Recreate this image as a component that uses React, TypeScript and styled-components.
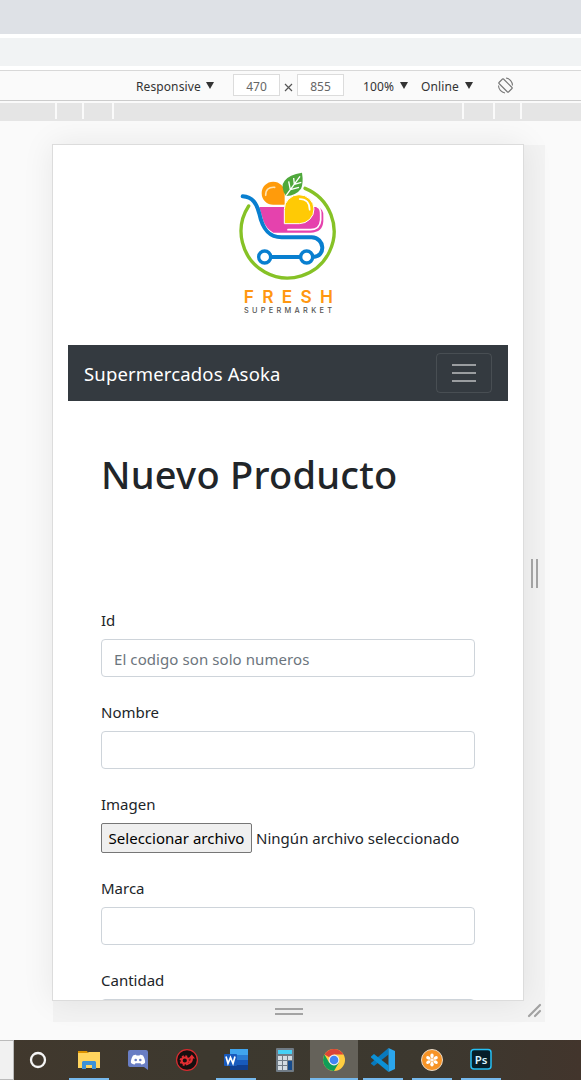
import React from "react";
import styled, { createGlobalStyle } from "styled-components";

const Global = createGlobalStyle`
  *{box-sizing:border-box}
  body{margin:0;width:581px;height:1080px;overflow:hidden;background:#fafafa;font-family:"Noto Sans","Open Sans",sans-serif;color:#212529}
`;
const Screen = styled.div`display:flex;flex-direction:column;width:581px;height:1080px;`;
const TabStrip = styled.div`height:34px;background:#dee1e6;`;
const AddressBar = styled.div`height:36px;background:#f1f3f4;border:solid #fff;border-width:4px 0;`;
const Toolbar = styled.div`
  height:31px;display:flex;align-items:flex-start;background:#fafafa;border-top:1px solid #d8d8d8;border-bottom:1px solid #ccc;
  padding-left:136px;font-size:12px;line-height:29px;color:#333;white-space:nowrap;
`;
const Label = styled.span<{ $w: number; $ml?: number; $ls?: number }>`
  width:${p => p.$w}px;margin-left:${p => p.$ml ?? 0}px;letter-spacing:${p => p.$ls ?? 0}px;height:29px;padding-top:1px;
`;
const Caret = styled.i<{ $gap: number }>`
  width:8px;height:7px;margin:11px ${p => p.$gap}px 0 0;background:#333;clip-path:polygon(0 0,100% 0,50% 100%);
`;
const SizeBox = styled.span`
  width:47px;height:22px;margin-top:3px;border:1px solid #dcdcdc;background:#fff;color:#666;text-align:center;line-height:23px;
`;
const Times = styled.span`width:17px;display:flex;justify-content:center;padding-top:12px;`;
const Rotate = styled.svg`margin:6px 0 0 24px;`;
const Ruler = styled.div`height:20px;padding-top:2px;display:flex;`;
const Segment = styled.i<{ $w: number }>`
  width:${p => p.$w}px;height:18px;background:linear-gradient(#fafafa,#fafafa) right top/2px 16px no-repeat #e5e5e5;
  &:last-child{background:#e5e5e5}
`;
const Stage = styled.div`
  height:919px;padding:23px 0 0 52px;display:grid;grid-template-columns:472px 21px;grid-template-rows:857px 21px;overflow:hidden;
`;
const Device = styled.main`
  width:472px;height:857px;border:1px solid #dcdcdc;background:#fff;overflow:hidden;padding:0 15px;
  box-shadow:0 0 30px rgba(0,0,0,.08);z-index:1;
`;
const SideGrip = styled.div`background:#f3f3f3;margin-top:1px;display:flex;gap:3px;align-items:center;padding-left:7px;`;
const BottomGrip = styled.div`background:#f3f3f3;display:flex;flex-direction:column;gap:3px;align-items:center;padding-top:7px;margin-left:1px;`;
const GripBar = styled.i<{ $v?: boolean }>`
  background:#a3a3a3;z-index:2;width:${p => (p.$v ? 2 : 28)}px;height:${p => (p.$v ? 29 : 2)}px;
`;
const Corner = styled.div`background:#f3f3f3;z-index:0;`;
const LogoBox = styled.div`height:200px;display:flex;justify-content:center;padding:15px 0 0 4px;`;
const Navbar = styled.nav`
  height:56px;background:#343a40;display:flex;align-items:center;justify-content:space-between;padding:0 16px;color:#fff;
`;
const Brand = styled.span`font-size:18.5px;letter-spacing:.15px;padding-top:1px;`;
const Toggler = styled.button`
  width:56px;height:40px;border:1px solid rgba(255,255,255,.1);border-radius:4px;background:none;padding:0;
  display:flex;flex-direction:column;gap:6px;align-items:center;justify-content:center;
  i{width:24px;height:2px;background:#9a9da0}
`;
const Title = styled.h1`
  margin:0;height:206px;padding:47px 0 0 33px;font-size:38px;font-weight:500;line-height:52px;letter-spacing:.25px;white-space:nowrap;
`;
const Form = styled.form`padding:0 33px;display:flex;flex-direction:column;gap:22px;`;
const Group = styled.label`display:flex;flex-direction:column;gap:8px;`;
const Caption = styled.span`font-size:15px;line-height:24px;height:24px;padding-top:1px;`;
const Input = styled.input`
  height:38px;border:1px solid #ced4da;border-radius:4px;padding:2px 12px 0;font:15px "Noto Sans",sans-serif;letter-spacing:.08px;background:#fff;
  &::placeholder{color:#6c757d;opacity:1}
`;
const FileRow = styled.span`display:flex;align-items:center;gap:4px;height:30px;font-size:15px;letter-spacing:.02px;white-space:nowrap;`;
const FileButton = styled.span`
  width:151px;height:30px;border:1px solid #767676;border-radius:2px;background:#efefef;color:#000;text-align:center;line-height:29px;
`;
const Taskbar = styled.footer`height:40px;display:flex;background:linear-gradient(90deg,#41382d,#3d392f 35%,#3c382f 75%,#42352c);`;
const SearchEnd = styled.div`width:14px;background:#f1f1f1;border:solid #bbb;border-width:1px 1px 1px 0;`;
const Task = styled.div<{ $active?: boolean; $open?: boolean; $gap?: number }>`
  width:48px;height:40px;margin-right:${p => p.$gap ?? 1}px;display:flex;align-items:center;justify-content:center;
  background:${p => (p.$active ? "#65625a" : "transparent")};
  ${p => p.$open && `background-image:linear-gradient(#76b9ed,#76b9ed);background-size:${p.$active ? 48 : 40}px 2px;background-position:center bottom;background-repeat:no-repeat;`}
`;

const Logo = () => (
  <svg width="140" height="165" viewBox="0 0 420 495">
    <path d="M86 138A139.5 139.5 0 1 0 255 85" fill="none" stroke="#86c226" strokeWidth="10" strokeLinecap="round" />
    <path d="M118 141H290Q312 144 310 170V184Q308 218 272 218H160Q138 205 130 182Z" fill="#e542ad" />
    <path d="M292 141Q303 145 302 165V180Q300 208 272 209H204" fill="none" stroke="#fff" strokeWidth="5" strokeLinecap="round" />
    <path d="M194 134V100A34.500 34.500 0 1 0 160 134Z" fill="#ff9b0b" />
    <path d="M137 106Q137 80 164 82" fill="none" stroke="#ffe3b0" strokeWidth="5" strokeLinecap="round" />
    <path d="M198 108Q179 79 194 62Q207 44 246 38Q251 68 243 86Q229 106 198 108Z" fill="#4fa83b" />
    <path d="M198 107L240 49M211 89L206 64M211 89L237 82M223 73L221 54M223 73L244 67" fill="none" stroke="#fff" strokeWidth="4" />
    <path d="M193 191V148A44.500 43.500 0 1 1 238 191Z" fill="#ffca05" stroke="#fff" strokeWidth="3" />
    <path d="M239 117Q269 118 269 149" fill="none" stroke="#fff" strokeWidth="5" strokeLinecap="round" />
    <path d="M68 109C98 111 110 130 118 161C127 205 145 232 185 232H275C315 233 318 290 280 291H260M135 291H260" fill="none" stroke="#087fd0" strokeWidth="12" strokeLinecap="round" />
    <g fill="#fff" stroke="#087fd0" strokeWidth="10"><circle cx="134" cy="291" r="18" /><circle cx="260" cy="291" r="18" /></g>
    <text x="71" y="428" textLength="268" fontFamily="Inter" fontWeight="600" fontSize="52" fill="#ff9711">FRESH</text>
    <text x="72" y="459" textLength="264" fontFamily="Inter" fontWeight="500" fontSize="22" fill="#555">SUPERMARKET</text>
  </svg>
);

const svg = { width: 24, height: 24, viewBox: "0 0 24 24" };
const Cortana = () => <svg {...svg}><circle cx="12" cy="12" r="7" fill="none" stroke="#f5f5f5" strokeWidth="2.3" /></svg>;
const Explorer = () => <svg {...svg}><path d="M1 3h9l1 2H1z" fill="#dd9300" /><path d="M1 5h9l2-1h11v16H1z" fill="#ffd45e" /><path d="M5 21v-7l1-1h12l1 1v7h-4v-4H9v4z" fill="#3c91d8" /></svg>;
const Discord = () => <svg {...svg}><path d="M4 2h16q2 0 2 2v18l-4-3H4q-2 0-2-2V4q0-2 2-2z" fill="#697ec4" /><path d="M7 7.500q2-1 3-.8l.5 .8h3l.5-.8q1-.2 3 .8 2.600 4.500 2 7.500-2 1.600-3.600 1.400l-.9-1.200h-5l-.9 1.200Q7 16.600 5 15q-.6-3 2-7.500z" fill="#fff" /><circle cx="9.700" cy="12" r="1.300" fill="#697ec4" /><circle cx="14.300" cy="12" r="1.300" fill="#697ec4" /></svg>;
const GearApp = () => <svg {...svg}><circle cx="12" cy="12" r="10.4" fill="#170f0f" stroke="#d92b2f" strokeWidth="1.2" /><circle cx="9.800" cy="12.500" r="3.100" fill="none" stroke="#e32e32" strokeWidth="2" /><circle cx="9.800" cy="12.500" r="4.500" fill="none" stroke="#e32e32" strokeWidth="1.500" strokeDasharray="2 1.530" /><path d="M12 15.500q3.500-1.500 3.500-5h-2l3.300-4 3.200 4h-2q0 5-6 6.500z" fill="#e32e32" /></svg>;
const Word = () => <svg {...svg}><path d="M6 1h18v6H6z" fill="#41a5ee" /><path d="M6 7h18v5H6z" fill="#2b7cd3" /><path d="M6 12h18v5H6z" fill="#185abd" /><path d="M6 17h18v5H6z" fill="#103f91" /><rect y="6" width="13" height="12" rx="1" fill="#185abd" /><path d="M2 8.500l2 7 2.500-6 2.500 6 2-7" stroke="#fff" strokeWidth="1.700" fill="none" /></svg>;
const Calc = () => <svg {...svg}><rect x="3" width="18" height="24" rx="1" fill="#707b85" /><path d="M5 2h14v4H5z" fill="#45d0f5" /><g fill="#d4dce2"><path d="M5 8h4v4H5zM10 8h4v4h-4zM15 8h4v4h-4zM5 13h4v4H5zM10 13h4v4h-4zM5 18h4v4H5zM10 18h4v4h-4z" /></g><path d="M15 13h4v9h-4z" fill="#164b8b" /></svg>;
const Chrome = () => <svg {...svg}><circle cx="12" cy="12" r="11" fill="#ffcd40" /><path d="M12 12L2.5 6.5A11 11 0 0 1 21.5 6.5H12z" fill="#db4437" /><path d="M2.5 6.5A11 11 0 0 0 12 23l4.8-8.3L12 12 7.2 14.7z" fill="#0f9d58" /><circle cx="12" cy="12" r="5.4" fill="#f1f1f1" /><circle cx="12" cy="12" r="4.3" fill="#4285f4" /></svg>;
const Code = () => <svg {...svg}><path d="M17.500 0v6.500L3 18l-3-2.200v-.8z" fill="#0879bd" /><path d="M0 8.500L3 6l14.500 11.500V24L0 9.500z" fill="#0b90d6" /><path d="M17.500 0L24 3v18l-6.500 3z" fill="#2ba6ed" /></svg>;
const Flower = () => (
  <svg {...svg}>
    <circle cx="12" cy="12" r="10.5" fill="#f79427" stroke="#e8d9c6" />
    <g fill="#fff">{[0, 60, 120, 180, 240, 300].map(a => <ellipse key={a} cx="12" cy="7.700" rx="1.700" ry="2.200" transform={`rotate(${a} 12 12)`} />)}</g>
    <path d="M12 8v8M8.500 10l7 4M8.500 14l7-4" stroke="#fff" strokeWidth="1" />
  </svg>
);
const Photoshop = () => <svg {...svg}><rect x="2" y="1.6" width="20" height="19.4" rx="3" fill="#061e29" stroke="#26c0f5" strokeWidth="1.5" /><text x="12" y="15.5" textAnchor="middle" fontSize="11.500" fontWeight="600" fill="#d9f3ff">Ps</text></svg>;

export default function App() {
  return (
    <Screen>
      <Global />
      <TabStrip />
      <AddressBar />
      <Toolbar>
        <Label $w={70} $ls={0.1}>Responsive</Label><Caret $gap={19} />
        <SizeBox>470</SizeBox>
        <Times><svg width="9" height="9"><path d="M1 1l7 7M8 1l-7 7" stroke="#555" strokeWidth="1.2" /></svg></Times>
        <SizeBox>855</SizeBox>
        <Label $w={37} $ml={19} $ls={0.1}>100%</Label><Caret $gap={13} />
        <Label $w={44} $ls={0.1}>Online</Label><Caret $gap={0} />
        <Rotate width="17" height="17" viewBox="0 0 17 17" fill="none" stroke="#777" strokeWidth="1.1">
          <path d="M2 5.500L5.500 2Q6 1.500 6.500 2L15 10.500Q15.500 11 15 11.500L11.500 15Q11 15.500 10.500 15L2 6.500Q1.500 6 2 5.500zM9 1a7.500 7.500 0 0 1 6.500 7.500M8 16a7.500 7.500 0 0 1-6.500-7.500" />
        </Rotate>
      </Toolbar>
      <Ruler>{[57, 27, 30, 350, 31, 27, 59].map((w, i) => <Segment key={i} $w={w} />)}</Ruler>
      <Stage>
        <Device>
          <LogoBox><Logo /></LogoBox>
          <Navbar><Brand>Supermercados Asoka</Brand><Toggler><i /><i /><i /></Toggler></Navbar>
          <Title>Nuevo Producto</Title>
          <Form>
            <Group><Caption>Id</Caption><Input placeholder="El codigo son solo numeros" /></Group>
            <Group><Caption>Nombre</Caption><Input /></Group>
            <Group as="div"><Caption>Imagen</Caption><FileRow><FileButton>Seleccionar archivo</FileButton>Ningún archivo seleccionado</FileRow></Group>
            <Group><Caption>Marca</Caption><Input /></Group>
            <Group><Caption>Cantidad</Caption><Input /></Group>
          </Form>
        </Device>
        <SideGrip><GripBar $v /><GripBar $v /></SideGrip>
        <BottomGrip><GripBar /><GripBar /></BottomGrip>
        <Corner><svg width="21" height="21"><path d="M5 15L16 4M11 15l5-5" stroke="#a3a3a3" strokeWidth="2.2" strokeLinecap="round" /></svg></Corner>
      </Stage>
      <Taskbar>
        <SearchEnd />
        <Task $gap={3}><Cortana /></Task>
        <Task $open><Explorer /></Task>
        <Task><Discord /></Task>
        <Task><GearApp /></Task>
        <Task $open><Word /></Task>
        <Task><Calc /></Task>
        <Task $active $open><Chrome /></Task>
        <Task $open><Code /></Task>
        <Task $open><Flower /></Task>
        <Task $open><Photoshop /></Task>
      </Taskbar>
    </Screen>
  );
}
